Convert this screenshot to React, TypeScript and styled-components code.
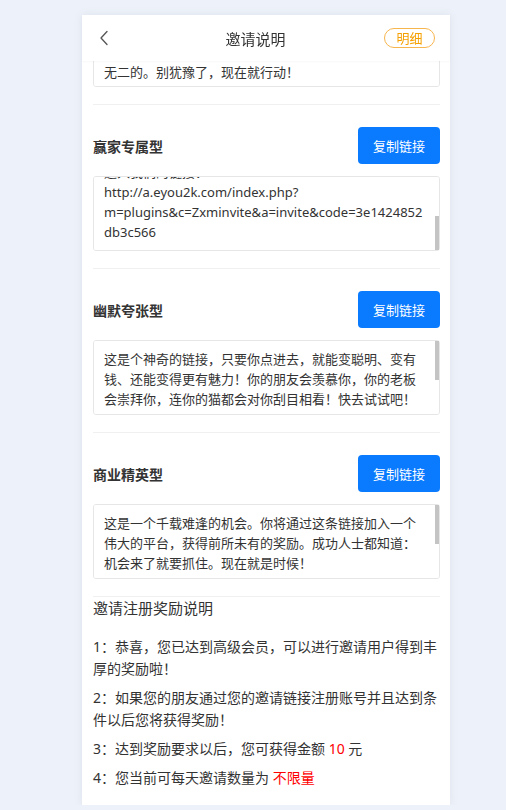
import { useLayoutEffect, useRef, useState, type RefObject } from "react";
import styled, { createGlobalStyle } from "styled-components";

const GlobalStyle = createGlobalStyle`
  html, body {
    margin: 0;
    padding: 0;
    background: #edf1f9;
  }
  body {
    font-family: "Noto Sans", "Noto Sans CJK SC", sans-serif;
    color: #333;
  }
`;

const Page = styled.div`
  padding: 15px 0 0 82px;
`;

const Card = styled.div`
  width: 368px;
  height: 790px;
  background: #fff;
  box-shadow: 0 0 8px rgba(120, 130, 150, 0.12);
  display: flex;
  flex-direction: column;
`;

const Header = styled.div`
  height: 46px;
  flex-shrink: 0;
  display: flex;
  align-items: center;
  justify-content: space-between;
  padding: 0 15px 0 17px;
  position: relative;
  z-index: 1;
  background: #fff;
  box-shadow: 0 1px 2px rgba(0, 0, 0, 0.03);
`;

const BackButton = styled.button`
  width: 28px;
  height: 28px;
  padding: 0;
  border: none;
  background: none;
  display: flex;
  align-items: center;
`;

const Title = styled.h1`
  margin: 0;
  font-size: 15px;
  font-weight: 400;
  color: #333;
`;

const DetailButton = styled.button`
  width: 51px;
  height: 20px;
  padding: 0;
  border: 1px solid #f7b54e;
  border-radius: 10px;
  background: #fff;
  color: #f5a000;
  font-family: inherit;
  font-size: 13px;
  line-height: 18px;
`;

const Body = styled.div`
  flex: 1;
  position: relative;
  overflow: hidden;
  padding: 0 10px 17px 11px;
`;

const Section = styled.section`
  padding: 22px 0 17px;
  border-bottom: 1px solid #f0f0f0;
`;

const SectionHead = styled.div`
  display: flex;
  align-items: center;
  justify-content: space-between;
  margin-bottom: 12px;
`;

const SectionTitle = styled.h3`
  margin: 0;
  font-size: 14px;
  font-weight: 700;
  color: #333;
`;

const CopyButton = styled.button`
  width: 82px;
  height: 37px;
  border: none;
  border-radius: 4px;
  background: #0a7bff;
  color: #fff;
  font-family: inherit;
  font-size: 13px;
`;

const BoxWrap = styled.div`
  position: relative;
`;

const LinkText = styled.textarea`
  display: block;
  width: 100%;
  height: 75px;
  box-sizing: border-box;
  margin: 0;
  padding: 8px 14px 8px 10px;
  border: 1px solid #e6e6e6;
  border-radius: 3px;
  font-family: "Noto Sans", "Noto Sans CJK SC", sans-serif;
  font-size: 13px;
  line-height: 20px;
  color: #333;
  background: #fff;
  outline: none;
  resize: none;
`;

const Thumb = styled.div`
  position: absolute;
  right: 1px;
  width: 4px;
  background: #c4c4c4;
`;

const RuleTitle = styled.h4`
  margin: 0 0 17px;
  font-size: 15px;
  font-weight: 400;
  line-height: 22px;
  color: #333;
`;

const RuleList = styled.div`
  display: flex;
  flex-direction: column;
  gap: 7px;
`;

const Rule = styled.p`
  margin: 0;
  font-size: 14px;
  line-height: 22px;
  color: #333;
`;

const Highlight = styled.span`
  color: #ff0000;
`;

const LINK =
  "http://a.eyou2k.com/index.php?m=plugins&c=Zxminvite&a=invite&code=3e1424852db3c566";

type Scroll = number | "end";

const templates: { title: string; text: string; scroll: Scroll }[] = [
  {
    title: "简约大气型",
    text: `我们诚挚地邀请你加入我们的平台，在这里你可以找到属于你的机会。你的加入会让这里更加精彩，你的未来也将独一\n无二的。别犹豫了，现在就行动！\n${LINK}`,
    scroll: 19,
  },
  {
    title: "赢家专属型",
    text: `成为赢家的第一步，就是点击这条专属链接！在这里你将结识志同道合的伙伴，获取最前沿的资讯，赢得属于你的财富与荣耀。准备好了吗？快来加入我们吧，点击进入我们的链接：\n${LINK}`,
    scroll: "end",
  },
  {
    title: "幽默夸张型",
    text: `这是个神奇的链接，只要你点进去，就能变聪明、变有钱、还能变得更有魅力！你的朋友会羡慕你，你的老板会崇拜你，连你的猫都会对你刮目相看！快去试试吧！\n${LINK}`,
    scroll: 0,
  },
  {
    title: "商业精英型",
    text: `这是一个千载难逢的机会。你将通过这条链接加入一个伟大的平台，获得前所未有的奖励。成功人士都知道：机会来了就要抓住。现在就是时候！\n${LINK}`,
    scroll: 0,
  },
];

type LinkBoxProps = {
  text: string;
  scroll: Scroll;
  boxRef?: RefObject<HTMLTextAreaElement | null>;
};

// the screenshot browser hides native scrollbars, so the thumb is drawn here
const LinkBox = ({ text, scroll, boxRef }: LinkBoxProps) => {
  const own = useRef<HTMLTextAreaElement>(null);
  const ref = boxRef ?? own;
  const [thumb, setThumb] = useState<{ top: number; height: number } | null>(null);

  useLayoutEffect(() => {
    const el = ref.current;
    if (!el) return;
    el.scrollTop = scroll === "end" ? el.scrollHeight : scroll;
    const view = el.clientHeight;
    const full = el.scrollHeight;
    if (full > view) {
      setThumb({
        top: 1 + (el.scrollTop / full) * view,
        height: (view / full) * view,
      });
    }
  }, [ref, scroll]);

  return (
    <BoxWrap>
      <LinkText ref={ref} readOnly defaultValue={text} />
      {thumb && <Thumb style={{ top: thumb.top, height: thumb.height }} />}
    </BoxWrap>
  );
};

const BackIcon = () => (
  <svg width="10" height="16" viewBox="0 0 10 16" fill="none">
    <polyline
      points="8,1.5 2,8 8,14.5"
      stroke="#555"
      strokeWidth="1.3"
      strokeLinecap="round"
      strokeLinejoin="round"
    />
  </svg>
);

const App = () => {
  const bodyRef = useRef<HTMLDivElement>(null);
  const firstBox = useRef<HTMLTextAreaElement>(null);

  // the page is shown scrolled: the first box ends just under the header
  useLayoutEffect(() => {
    const body = bodyRef.current;
    const box = firstBox.current;
    if (!body || !box) return;
    const wrap = box.parentElement as HTMLElement;
    body.scrollTop = wrap.offsetTop + wrap.offsetHeight - 26;
  }, []);

  return (
    <>
      <GlobalStyle />
      <Page>
        <Card>
          <Header>
            <BackButton aria-label="返回">
              <BackIcon />
            </BackButton>
            <Title>邀请说明</Title>
            <DetailButton>明细</DetailButton>
          </Header>
          <Body ref={bodyRef}>
            {templates.map((t, i) => (
              <Section key={t.title}>
                <SectionHead>
                  <SectionTitle>{t.title}</SectionTitle>
                  <CopyButton>复制链接</CopyButton>
                </SectionHead>
                <LinkBox
                  text={t.text}
                  scroll={t.scroll}
                  boxRef={i === 0 ? firstBox : undefined}
                />
              </Section>
            ))}
            <RuleTitle>邀请注册奖励说明</RuleTitle>
            <RuleList>
              <Rule>1：恭喜，您已达到高级会员，可以进行邀请用户得到丰厚的奖励啦！</Rule>
              <Rule>2：如果您的朋友通过您的邀请链接注册账号并且达到条件以后您将获得奖励！</Rule>
              <Rule>
                3：达到奖励要求以后，您可获得金额 <Highlight>10</Highlight> 元
              </Rule>
              <Rule>
                4：您当前可每天邀请数量为 <Highlight>不限量</Highlight>
              </Rule>
            </RuleList>
          </Body>
        </Card>
      </Page>
    </>
  );
};

export default App;
